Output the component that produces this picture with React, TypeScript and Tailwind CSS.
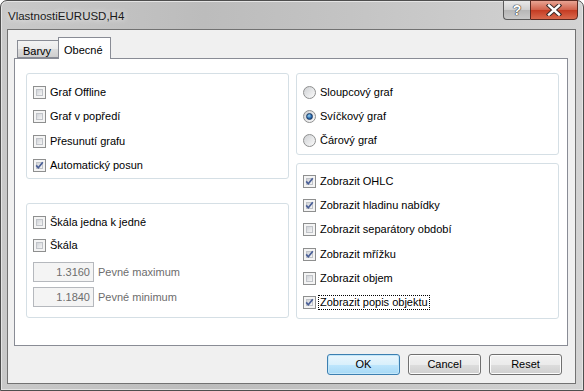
import React from "react";

const font = "font-['Liberation_Sans',Arial,sans-serif]";

function CheckBox({ checked }: { checked?: boolean }) {
  return (
    <span className="relative w-[13px] h-[13px] shrink-0 border border-[#8e8f8f] bg-[#f4f4f4] p-[2px]">
      <span className="block w-full h-full border border-[#c0c3c8] bg-gradient-to-br from-[#d0d3d8] to-[#f5f5f5]" />
      {checked && (
        <svg className="absolute left-0 top-0" width="11" height="11" viewBox="0 0 11 11">
          <path d="M2.2 5.4 L4.3 7.8 L8.8 2.2" fill="none" stroke="#4a5f97" strokeWidth="1.7" />
        </svg>
      )}
    </span>
  );
}

function Radio({ checked }: { checked?: boolean }) {
  return (
    <span className="w-[13px] h-[13px] shrink-0 rounded-full border border-[#8e8f8f] bg-gradient-to-br from-[#cfd1d4] to-[#fbfbfb] flex items-center justify-center">
      {checked && (
        <span className="w-[7px] h-[7px] rounded-full border border-[#1c3a64] bg-[radial-gradient(circle_at_40%_35%,#9bd6f3,#2a6bb0_55%,#0f3566)]" />
      )}
    </span>
  );
}

function Row({
  children,
  radio,
  checked,
  focus,
}: {
  children: React.ReactNode;
  radio?: boolean;
  checked?: boolean;
  focus?: boolean;
}) {
  return (
    <div className="h-[16px] flex items-center">
      {radio ? <Radio checked={checked} /> : <CheckBox checked={checked} />}
      <span
        className={`ml-[2px] px-[1px] leading-[13px] whitespace-nowrap ${
          focus ? "border border-dotted border-black" : "border border-transparent"
        }`}
      >
        {children}
      </span>
    </div>
  );
}

function DisabledInput({ value, label }: { value: string; label: string }) {
  return (
    <div className="h-[20px] flex items-center">
      <div className="w-[61px] h-[20px] border border-[#b5b8bd] bg-[#f4f4f4] flex items-center justify-end pr-[3px] text-[#6d6d6d]">
        {value}
      </div>
      <span className="ml-[4px] text-[#6d6d6d]">{label}</span>
    </div>
  );
}

function Button({ children, primary }: { children: React.ReactNode; primary?: boolean }) {
  return (
    <button
      className={`w-[73px] h-[21px] rounded-[3px] border text-[11px] text-black ${
        primary
          ? "border-[#3c7fb1] bg-[linear-gradient(#eaf6fd_0%,#d9f0fc_50%,#bee6fd_51%,#a7d9f5_100%)] shadow-[inset_0_0_0_1px_#c4e7f9]"
          : "border-[#707070] bg-[linear-gradient(#f2f2f2_0%,#ebebeb_50%,#dddddd_51%,#cfcfcf_100%)] shadow-[inset_0_0_0_1px_#fcfcfc]"
      }`}
    >
      {children}
    </button>
  );
}

export default function App() {
  return (
    <div className={`w-[584px] h-[391px] ${font} text-[11px] text-black`}>
      <div className="w-full h-full flex flex-col rounded-t-[7px] border border-[#4e4e4e] bg-[linear-gradient(to_right,#c9c9c9,#bcbcbc_35%,#c4c4c4_60%,#d3d3d3)] shadow-[inset_0_0_0_1px_#e4e4e4]">
        {/* title bar */}
        <div className="h-[28px] flex items-start shrink-0">
          <div className="pl-[7px] pt-[7px] text-[11.5px] text-[#1a1a1a] [text-shadow:0_0_6px_#ffffff]">
            VlastnostiEURUSD,H4
          </div>
          <div className="ml-auto mr-[5px] -mt-px flex">
            <div className="w-[27px] h-[20px] rounded-bl-[4px] border border-[#5b5b5b] border-r-0 bg-[linear-gradient(#e9e9e9,#cfcfcf_50%,#b6b6b6_51%,#c9c9c9)] flex items-center justify-center">
              <span className="text-[14px] font-bold text-white leading-none [text-shadow:0_0_1px_#333,0_0_1px_#333,0_0_1px_#333]">
                ?
              </span>
            </div>
            <div className="w-[48px] h-[20px] rounded-br-[4px] border border-[#5b2a22] bg-[linear-gradient(#e8a493,#d0604a_50%,#c43b22_51%,#d9694d)] flex items-center justify-center">
              <svg width="16" height="12" viewBox="0 0 16 12">
                <path
                  d="M3 1.5 L13 10.5 M13 1.5 L3 10.5"
                  stroke="#3a2a28"
                  strokeWidth="4.4"
                  strokeLinecap="square"
                />
                <path
                  d="M3 1.5 L13 10.5 M13 1.5 L3 10.5"
                  stroke="#ffffff"
                  strokeWidth="2.4"
                  strokeLinecap="square"
                />
              </svg>
            </div>
          </div>
        </div>

        {/* client area */}
        <div className="flex-1 ml-[6px] mr-[7px] mb-[6px] border border-[#727272] bg-[#f0f0f0] flex flex-col pl-[6px] pr-[7px] pt-[7px]">
          {/* tabs */}
          <div className="h-[21px] flex items-end pl-[3px] shrink-0">
            <div className="h-[18px] w-[41px] border border-[#898c95] border-r-0 bg-[linear-gradient(#f3f3f3,#ebebeb_50%,#dddddd_51%,#cfcfcf)] pl-[5px] pt-[2px]">
              Barvy
            </div>
            <div className="relative z-10 h-[22px] -mb-px w-[53px] border border-[#898c95] border-b-0 bg-white pl-[5px] pt-[4px]">
              Obecné
            </div>
          </div>

          {/* panel */}
          <div className="h-[288px] border border-[#898c95] bg-white flex pl-[11px] pr-[8px] pt-[14px] gap-[7px] shrink-0">
            <div className="w-[263px] flex flex-col gap-[24px]">
              <div className="h-[106px] rounded-[3px] border border-[#d5dfe5] pl-[6px] pt-[10px] flex flex-col gap-[8.5px]">
                <Row>Graf Offline</Row>
                <Row>Graf v popředí</Row>
                <Row>Přesunutí grafu</Row>
                <Row checked>Automatický posun</Row>
              </div>
              <div className="h-[115px] rounded-[3px] border border-[#d5dfe5] pl-[6px] pt-[10px] flex flex-col">
                <Row>Škála jedna k jedné</Row>
                <div className="mt-[7px]">
                  <Row>Škála</Row>
                </div>
                <div className="mt-[9px]">
                  <DisabledInput value="1.3160" label="Pevné maximum" />
                </div>
                <div className="mt-[5px]">
                  <DisabledInput value="1.1840" label="Pevné minimum" />
                </div>
              </div>
            </div>
            <div className="w-[263px] flex flex-col gap-[8px]">
              <div className="h-[82px] rounded-[3px] border border-[#d5dfe5] pl-[6px] pt-[10px] flex flex-col gap-[8px]">
                <Row radio>Sloupcový graf</Row>
                <Row radio checked>
                  Svíčkový graf
                </Row>
                <Row radio>Čárový graf</Row>
              </div>
              <div className="h-[156px] rounded-[3px] border border-[#d5dfe5] pl-[6px] pt-[9px] flex flex-col gap-[8.4px]">
                <Row checked>Zobrazit OHLC</Row>
                <Row checked>Zobrazit hladinu nabídky</Row>
                <Row>Zobrazit separátory období</Row>
                <Row checked>Zobrazit mřížku</Row>
                <Row>Zobrazit objem</Row>
                <Row checked focus>
                  Zobrazit popis objektu
                </Row>
              </div>
            </div>
          </div>

          {/* buttons */}
          <div className="mt-[8px] flex justify-end gap-[8px] pr-[6px]">
            <Button primary>OK</Button>
            <Button>Cancel</Button>
            <Button>Reset</Button>
          </div>
        </div>
      </div>
    </div>
  );
}
